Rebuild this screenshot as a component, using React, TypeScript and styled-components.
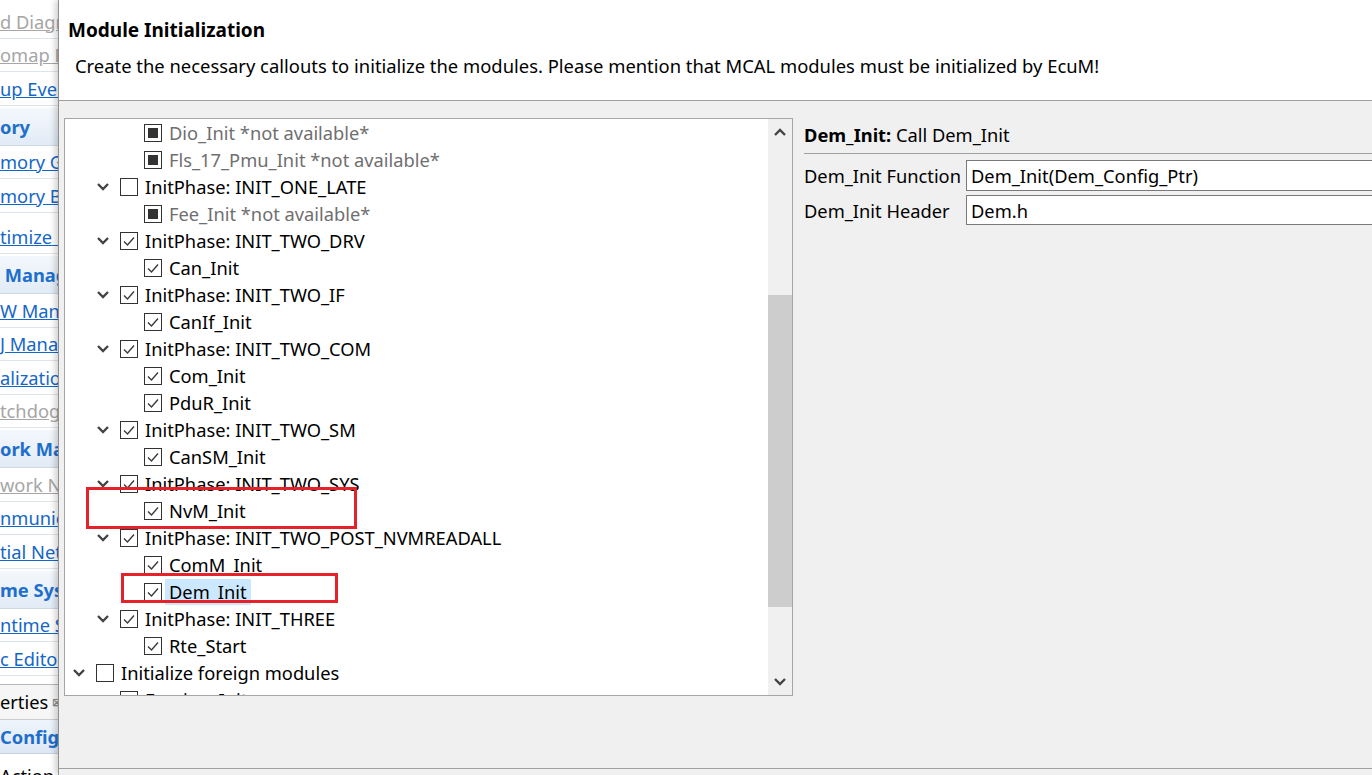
import React from 'react'
import styled, { createGlobalStyle } from 'styled-components'

const GlobalStyle = createGlobalStyle`
  html, body, #root {
    margin: 0;
    padding: 0;
    height: 100%;
  }
  body {
    font-family: "Noto Sans", "Open Sans", sans-serif;
    overflow: hidden;
    background: #ffffff;
  }
`

const Page = styled.div`
  display: flex;
  width: 1372px;
  height: 775px;
  overflow: hidden;
  font-size: 18.3px;
`

/* ---------- left navigator (behind the dialog) ---------- */

const Sidebar = styled.div`
  width: 58px;
  flex-shrink: 0;
  display: flex;
  flex-direction: column;
  padding-top: 5px;
  overflow: hidden;
  background: #ffffff;
`

const Section = styled.div<{ $pad?: number }>`
  display: flex;
  flex-direction: column;
  margin-bottom: 2px;
  padding-top: ${({ $pad }) => ($pad ? $pad + 'px' : '0')};
`

const SectionHeader = styled.div`
  height: 38px;
  display: flex;
  align-items: center;
  white-space: nowrap;
  font-weight: 700;
  color: #1e6fcc;
  background: linear-gradient(180deg, #f4f8fc 0%, #e1ebf6 100%);
  border-bottom: 1px solid #cfd9e4;
  box-sizing: border-box;
`

const NavLink = styled.a<{ $muted?: boolean }>`
  height: 33.5px;
  display: flex;
  align-items: center;
  white-space: nowrap;
  color: ${({ $muted }) => ($muted ? '#a6a6a6' : '#1467c8')};
  text-decoration: underline;
  border-bottom: 1px solid #dde4ec;
  box-sizing: border-box;
`

const BottomArea = styled.div`
  margin-top: 6px;
  border-top: 1px solid #b8b8b8;
  display: flex;
  flex-direction: column;
`

const TabLabel = styled.div`
  height: 35px;
  display: flex;
  align-items: center;
  white-space: nowrap;
  color: #000;
  background: #f6f6f6;
  border-bottom: 1px solid #cccccc;
  box-sizing: border-box;
`

const TabClose = styled.span`
  font-size: 11px;
  color: #777;
  margin-left: 4px;
`

const ConfigHeader = styled.div`
  height: 34px;
  display: flex;
  align-items: center;
  white-space: nowrap;
  font-weight: 700;
  color: #1e6fcc;
  background: linear-gradient(180deg, #eef4fb 0%, #dde8f5 100%);
  border-bottom: 1px solid #c7d2de;
  box-sizing: border-box;
`

const PlainRow = styled.div`
  height: 30px;
  display: flex;
  align-items: flex-end;
  white-space: nowrap;
  color: #000;
  transform: translateY(4px);
`

/* ---------- dialog ---------- */

const Dialog = styled.div`
  flex: 1;
  display: flex;
  flex-direction: column;
  min-width: 0;
  background: #f0f0f0;
  border-left: 1px solid #8f8f8f;
  box-shadow: -3px 0 6px rgba(0, 0, 0, 0.18);
  position: relative;
  z-index: 1;
`

const Header = styled.div`
  height: 101px;
  box-sizing: border-box;
  background: #ffffff;
  border-bottom: 1px solid #a0a0a0;
  padding: 18px 0 0 9px;
`

const Title = styled.div`
  font-size: 19px;
  font-weight: 700;
  line-height: 24px;
  color: #000;
`

const Description = styled.div`
  margin-top: 12px;
  padding-left: 7px;
  font-size: 18.4px;
  line-height: 24px;
  color: #000;
  white-space: nowrap;
`

const Body = styled.div`
  flex: 1;
  display: flex;
  gap: 11px;
  padding: 17px 0 0 5px;
  min-height: 0;
`

const Footer = styled.div`
  height: 6px;
  border-top: 1px solid #a0a0a0;
  background: #f0f0f0;
`

/* ---------- tree ---------- */

const TreePanel = styled.div`
  width: 729px;
  height: 578px;
  box-sizing: border-box;
  border: 1px solid #a6a6a6;
  background: #ffffff;
  display: flex;
  position: relative;
  flex-shrink: 0;
`

const TreeList = styled.div`
  flex: 1;
  overflow: hidden;
`

const Row = styled.div<{ $level: number }>`
  height: 27px;
  display: flex;
  align-items: center;
  padding-left: ${({ $level }) => 6 + $level * 24}px;
  white-space: nowrap;
`

const Twisty = styled.span`
  width: 16px;
  height: 16px;
  display: flex;
  align-items: center;
  justify-content: center;
  margin-right: 9px;
  flex-shrink: 0;
`

const Box = styled.span`
  width: 18px;
  height: 18px;
  box-sizing: border-box;
  border: 1px solid #333333;
  background: #ffffff;
  display: flex;
  align-items: center;
  justify-content: center;
  flex-shrink: 0;
`

const Fill = styled.span`
  width: 10px;
  height: 10px;
  background: #333333;
`

const Label = styled.span<{ $muted?: boolean; $selected?: boolean }>`
  margin-left: 3px;
  padding: 0 4px;
  line-height: 26px;
  color: ${({ $muted }) => ($muted ? '#6f6f6f' : '#000000')};
  background: ${({ $selected }) => ($selected ? '#cce8ff' : 'transparent')};
`

const ScrollBar = styled.div`
  width: 24px;
  flex-shrink: 0;
  background: #f0f0f0;
  display: flex;
  flex-direction: column;
`

const ScrollArrow = styled.div`
  height: 26px;
  display: flex;
  align-items: center;
  justify-content: center;
  flex-shrink: 0;
`

const ScrollTrack = styled.div`
  flex: 1;
`

const ScrollThumb = styled.div`
  background: #cdcdcd;
`

const Marker = styled.div`
  position: absolute;
  border: 3px solid #e52129;
  box-sizing: border-box;
  pointer-events: none;
`

/* ---------- details ---------- */

const Details = styled.div`
  flex: 1;
  min-width: 0;
  padding-top: 5px;
  margin-right: -30px;
`

const DetailsTitle = styled.div`
  line-height: 24px;
  padding-bottom: 6px;
  border-bottom: 1px solid #a0a0a0;
  color: #000;
  white-space: nowrap;
`

const Strong = styled.span`
  font-weight: 700;
`

const Fields = styled.div`
  display: flex;
  flex-direction: column;
  gap: 4px;
  margin-top: 6px;
`

const Field = styled.div`
  display: grid;
  grid-template-columns: 162px 1fr;
  align-items: center;
`

const FieldLabel = styled.span`
  color: #000;
  white-space: nowrap;
`

const Input = styled.div<{ $h: number }>`
  height: ${({ $h }) => $h}px;
  box-sizing: border-box;
  border: 1px solid #7a7a7a;
  background: #ffffff;
  display: flex;
  align-items: center;
  padding-left: 4px;
  color: #000;
  white-space: nowrap;
`

/* ---------- icons ---------- */

const Chevron = ({ up }: { up?: boolean }) => (
  <svg width="12" height="8" viewBox="0 0 12 8">
    <polyline
      points={up ? '1,7 6,2 11,7' : '1,1 6,6 11,1'}
      fill="none"
      stroke="#444444"
      strokeWidth="2.4"
    />
  </svg>
)

const Check = () => (
  <svg width="16" height="16" viewBox="0 0 16 16">
    <polyline points="3,8.5 6.5,12 13,4.5" fill="none" stroke="#3a3a3a" strokeWidth="1.4" />
  </svg>
)

type CheckState = 'on' | 'off' | 'mixed'

interface TreeNode {
  level: number
  label: string
  state: CheckState
  expandable?: boolean
  muted?: boolean
  selected?: boolean
}

const nodes: TreeNode[] = [
  { level: 2, label: 'Dio_Init *not available*', state: 'mixed', muted: true },
  { level: 2, label: 'Fls_17_Pmu_Init *not available*', state: 'mixed', muted: true },
  { level: 1, label: 'InitPhase: INIT_ONE_LATE', state: 'off', expandable: true },
  { level: 2, label: 'Fee_Init *not available*', state: 'mixed', muted: true },
  { level: 1, label: 'InitPhase: INIT_TWO_DRV', state: 'on', expandable: true },
  { level: 2, label: 'Can_Init', state: 'on' },
  { level: 1, label: 'InitPhase: INIT_TWO_IF', state: 'on', expandable: true },
  { level: 2, label: 'CanIf_Init', state: 'on' },
  { level: 1, label: 'InitPhase: INIT_TWO_COM', state: 'on', expandable: true },
  { level: 2, label: 'Com_Init', state: 'on' },
  { level: 2, label: 'PduR_Init', state: 'on' },
  { level: 1, label: 'InitPhase: INIT_TWO_SM', state: 'on', expandable: true },
  { level: 2, label: 'CanSM_Init', state: 'on' },
  { level: 1, label: 'InitPhase: INIT_TWO_SYS', state: 'on', expandable: true },
  { level: 2, label: 'NvM_Init', state: 'on' },
  { level: 1, label: 'InitPhase: INIT_TWO_POST_NVMREADALL', state: 'on', expandable: true },
  { level: 2, label: 'ComM_Init', state: 'on' },
  { level: 2, label: 'Dem_Init', state: 'on', selected: true },
  { level: 1, label: 'InitPhase: INIT_THREE', state: 'on', expandable: true },
  { level: 2, label: 'Rte_Start', state: 'on' },
  { level: 0, label: 'Initialize foreign modules', state: 'off', expandable: true },
  { level: 1, label: 'Foreign_Init', state: 'off' },
]

interface NavSection {
  header?: string
  pad?: number
  links: { text: string; muted?: boolean }[]
}

const navSections: NavSection[] = [
  { links: [{ text: 'd Diagnostics', muted: true }, { text: 'omap Editor', muted: true }, { text: 'up Events' }] },
  { header: 'ory', links: [{ text: 'mory Groups' }, { text: 'mory Blocks' }] },
  { pad: 6, links: [{ text: 'timize Fee' }] },
  {
    header: '\u00a0Management',
    links: [{ text: 'W Management' }, { text: 'J Management' }, { text: 'alization' }, { text: 'tchdog', muted: true }],
  },
  { header: 'ork Management', links: [{ text: 'work Nm', muted: true }, { text: 'nmunication' }, { text: 'tial Network' }] },
  { header: 'me System', links: [{ text: 'ntime System' }, { text: 'c Editor' }] },
]

function TreeRow({ node }: { node: TreeNode }) {
  return (
    <Row $level={node.level}>
      <Twisty>{node.expandable && <Chevron />}</Twisty>
      <Box>
        {node.state === 'on' && <Check />}
        {node.state === 'mixed' && <Fill />}
      </Box>
      <Label $muted={node.muted} $selected={node.selected}>
        {node.label}
      </Label>
    </Row>
  )
}

export default function App() {
  return (
    <Page>
      <GlobalStyle />
      <Sidebar>
        {navSections.map((section, i) => (
          <Section key={i} $pad={section.pad}>
            {section.header && <SectionHeader>{section.header}</SectionHeader>}
            {section.links.map((link) => (
              <NavLink key={link.text} $muted={link.muted}>
                {link.text}
              </NavLink>
            ))}
          </Section>
        ))}
        <BottomArea>
          <TabLabel>
            erties<TabClose>⊠</TabClose>
          </TabLabel>
          <ConfigHeader>Configuration</ConfigHeader>
          <PlainRow>Action</PlainRow>
        </BottomArea>
      </Sidebar>

      <Dialog>
        <Header>
          <Title>Module Initialization</Title>
          <Description>
            Create the necessary callouts to initialize the modules. Please mention that MCAL modules must be
            initialized by EcuM!
          </Description>
        </Header>

        <Body>
          <TreePanel>
            <TreeList>
              {nodes.map((node) => (
                <TreeRow key={node.label} node={node} />
              ))}
            </TreeList>
            <ScrollBar>
              <ScrollArrow>
                <Chevron up />
              </ScrollArrow>
              <ScrollTrack>
                <ScrollThumb style={{ marginTop: 150, height: 312 }} />
              </ScrollTrack>
              <ScrollArrow>
                <Chevron />
              </ScrollArrow>
            </ScrollBar>
            <Marker style={{ left: 21, top: 368, width: 271, height: 42 }} />
            <Marker style={{ left: 56, top: 454, width: 217, height: 30 }} />
          </TreePanel>

          <Details>
            <DetailsTitle>
              <Strong>Dem_Init:</Strong> Call Dem_Init
            </DetailsTitle>
            <Fields>
              <Field>
                <FieldLabel>Dem_Init Function</FieldLabel>
                <Input $h={31}>Dem_Init(Dem_Config_Ptr)</Input>
              </Field>
              <Field>
                <FieldLabel>Dem_Init Header</FieldLabel>
                <Input $h={30}>Dem.h</Input>
              </Field>
            </Fields>
          </Details>
        </Body>
        <Footer />
      </Dialog>
    </Page>
  )
}
